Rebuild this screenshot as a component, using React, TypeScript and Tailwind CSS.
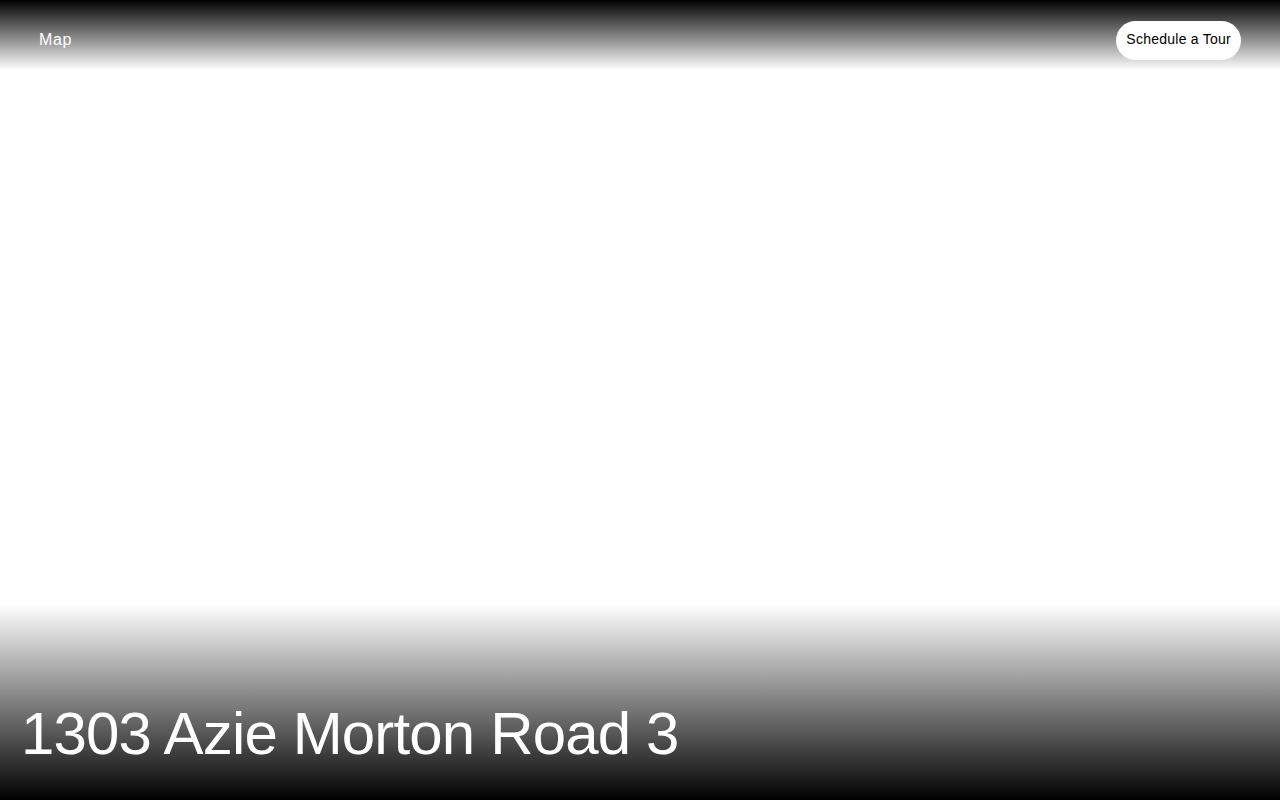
import React from 'react';

const App: React.FC = () => {
  return (
    <div
      className="relative flex h-[800px] w-full flex-col justify-between overflow-hidden bg-white text-white"
      style={{ fontFamily: '"Liberation Sans", Arial, sans-serif' }}
    >
      {/* Top bar */}
      <header className="flex h-[70px] items-start justify-between bg-gradient-to-b from-black to-transparent px-[39px] pt-[21px]">
        <a href="#" className="flex h-[37px] items-center text-[16px] tracking-[0.6px] text-white">
          Map
        </a>
        <button className="flex h-[39px] items-center rounded-full bg-white px-[10px] pb-[2px] text-[14px] tracking-[0.25px] text-black">
          Schedule a Tour
        </button>
      </header>

      {/* Bottom title */}
      <footer className="flex h-[196px] items-end bg-gradient-to-b from-transparent to-black px-[21px] pb-[32px]">
        <h1 className="text-[60px] font-normal leading-[69px] tracking-[-0.85px] text-white">1303 Azie Morton Road 3</h1>
      </footer>
    </div>
  );
};

export default App;
